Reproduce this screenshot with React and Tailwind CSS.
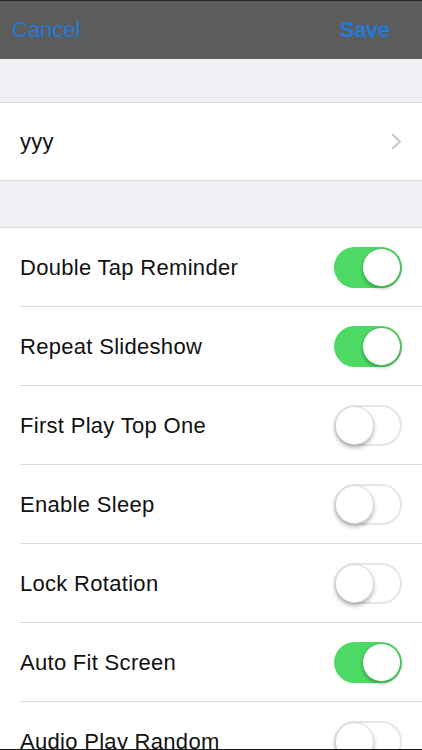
import React from "react";

const font = { fontFamily: '"Liberation Sans", Arial, sans-serif' };

function Toggle({ on }) {
  if (on) {
    return (
      <div className="w-[68px] h-[41px] rounded-full bg-[#4cd964] flex items-center justify-end pr-[1px] shrink-0">
        <div className="w-[39px] h-[39px] rounded-full bg-white border border-[#3fbf55] shadow-[0_2px_3px_rgba(0,0,0,0.25)]" />
      </div>
    );
  }
  return (
    <div className="w-[68px] h-[41px] rounded-full bg-white border-2 border-[#e6e6e9] flex items-center justify-start shrink-0">
      <div className="w-[39px] h-[39px] -ml-[1px] rounded-full bg-white border border-[#d8d8d8] shadow-[0_3px_4px_rgba(0,0,0,0.28)]" />
    </div>
  );
}

const rows = [
  ["Double Tap Reminder", true],
  ["Repeat Slideshow", true],
  ["First Play Top One", false],
  ["Enable Sleep", false],
  ["Lock Rotation", false],
  ["Auto Fit Screen", true],
  ["Audio Play Random", false],
];

export default function App() {
  return (
    <div
      className="w-[422px] h-[750px] overflow-hidden bg-[#efeff4] flex flex-col border-b border-[#1a1a1a]"
      style={font}
    >
      <div className="h-[59px] shrink-0 bg-[#5c5c5c] border-t border-[#262626] flex items-center justify-between pl-[12px] pr-[32px]">
        <span className="text-[22px] text-[#1f7ad8] leading-none">Cancel</span>
        <span className="text-[22px] font-bold text-[#1f7ad8] leading-none tracking-[-0.3px]">Save</span>
      </div>
      <div className="h-[43px] shrink-0" />
      <div className="bg-white border-y border-[#dadade] h-[79px] shrink-0 flex items-center justify-between pl-[20px] pr-[20px]">
        <span className="text-[22px] tracking-[0.3px] text-[#111]">yyy</span>
        <svg width="11" height="17" viewBox="0 0 11 17" fill="none">
          <path d="M1.5 1.5 L9 8.5 L1.5 15.5" stroke="#c7c7cc" strokeWidth="2" strokeLinecap="round" strokeLinejoin="round" />
        </svg>
      </div>
      <div className="h-[46px] shrink-0" />
      <div className="bg-white border-t border-[#dadade] shrink-0">
        {rows.map(([label, on]) => (
          <div key={label} className="pl-[20px]">
            <div className="h-[79px] border-b border-[#dcdce0] flex items-center justify-between pr-[20px]">
              <span className="text-[22px] tracking-[0.3px] text-[#111]">{label}</span>
              <Toggle on={on} />
            </div>
          </div>
        ))}
      </div>
    </div>
  );
}
